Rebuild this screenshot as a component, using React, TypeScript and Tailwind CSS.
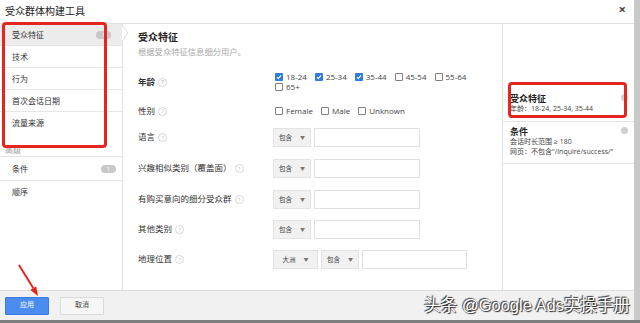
import { Fragment } from 'react';

const navItems = ['受众特征', '技术', '行为', '首次会话日期', '流量来源'];
const ages = [
    { label: '18-24', checked: true },
    { label: '25-34', checked: true },
    { label: '35-44', checked: true },
    { label: '45-54', checked: false },
    { label: '55-64', checked: false },
    { label: '65+', checked: false },
];

function Box({ checked }: { checked: boolean }) {
    if (checked) {
        return (
            <span className="w-[8px] h-[8px] rounded-[1px] bg-[#2e7be0] flex items-center justify-center shrink-0">
                <svg width="6" height="6" viewBox="0 0 6 6"><polyline points="1,3.2 2.4,4.6 5,1.4" fill="none" stroke="#fff" strokeWidth="1.2" /></svg>
            </span>
        );
    }
    return <span className="w-[8px] h-[8px] rounded-[1px] border border-[#808080] bg-white shrink-0" />;
}

function Help() {
    return (
        <span className="ml-[3px] w-[9px] h-[9px] rounded-full border border-[#d6d6d6] text-[#c4c4c4] text-[6px] leading-none flex items-center justify-center shrink-0">?</span>
    );
}

function Label({ text, bold }: { text: string; bold?: boolean }) {
    return (
        <div className={`w-[135px] flex items-center text-[8.5px] text-[#333] ${bold ? 'font-bold' : ''}`}>
            {text}<Help />
        </div>
    );
}

function Select({ text, w }: { text: string; w: string }) {
    return (
        <div className={`${w} h-[19px] bg-[#f1f1f1] border border-[#e3e3e3] flex items-center justify-center gap-[8px] text-[6.5px] text-[#444]`}>
            <span>{text}</span>
            <span className="text-[5px] text-[#777]">▼</span>
        </div>
    );
}

function Input({ w }: { w: string }) {
    return <div className={`${w} h-[19px] bg-white border border-[#e0e0e0]`} />;
}

export default function App() {
    return (
        <div className="relative w-[640px] h-[323px] bg-white overflow-hidden flex border-b-[3px] border-[#7d7d7d] font-['Open_Sans','Noto_Sans_CJK_SC',sans-serif]">
            <div className="flex-1 flex flex-col border-r-[6px] border-[#c9c9c9]">
                {/* HEADER */}
                <header className="h-[24px] border-b border-[#e2e2e2] flex items-center justify-between pl-[5px] pr-[8px] shrink-0">
                    <h1 className="text-[10px] text-[#222]">受众群体构建工具</h1>
                    <span className="text-[13px] font-bold text-[#444] leading-none pb-[4px]">×</span>
                </header>

                <div className="flex flex-1 min-h-0">
                    {/* NAV */}
                    <nav className="w-[123px] border-r border-[#e2e2e2] shrink-0 flex flex-col">
                        {navItems.map((n, i) => (
                            <div key={n} className={`h-[22px] flex items-center justify-between pl-[12px] text-[8px] text-[#333] ${i < 4 ? 'border-b border-[#e6e6e6]' : ''} ${i === 0 ? 'bg-[#ececec] pr-[11px]' : ''}`}>
                                {n}
                                {i === 0 && <span className="w-[15px] h-[8px] rounded-full bg-[#c8c8c8] text-white text-[6px] leading-none flex items-center justify-center">1</span>}
                            </div>
                        ))}
                        <div className="mt-[12px] h-[11px] border-b border-[#e6e6e6] pl-[5px] text-[8px] leading-[8px] text-[#a0a0a0]">高级</div>
                        <div className="h-[24px] border-b border-[#e6e6e6] flex items-center justify-between pl-[12px] pr-[6px] text-[8px] text-[#333]">
                            条件
                            <span className="w-[15px] h-[8px] rounded-full bg-[#c8c8c8] text-white text-[6px] leading-none flex items-center justify-center">1</span>
                        </div>
                        <div className="h-[22px] flex items-center pl-[12px] text-[8px] text-[#333]">顺序</div>
                    </nav>

                    {/* MAIN FORM */}
                    <main className="w-[380px] border-r border-[#e2e2e2] shrink-0 pl-[15px] pt-[6px] flex flex-col">
                        <h2 className="text-[10px] leading-[14px] font-bold text-[#222]">受众特征</h2>
                        <p className="mt-[2px] text-[8.3px] leading-[12px] text-[#a8a8a8]">根据受众特征信息细分用户。</p>

                        <div className="mt-[13px] h-[22px] flex items-center">
                            <Label text="年龄" bold />
                            <div className="w-[200px] flex flex-wrap gap-x-[8px] pl-[2px]">
                                {ages.map(a => (
                                    <span key={a.label} className="h-[10px] flex items-center gap-[3px] text-[8px] text-[#444]">
                                        <Box checked={a.checked} />{a.label}
                                    </span>
                                ))}
                            </div>
                        </div>
                        <div className="mt-[11px] h-[14px] flex items-center">
                            <Label text="性别" />
                            <div className="flex gap-x-[8px] pl-[2px]">
                                {['Female', 'Male', 'Unknown'].map(g => (
                                    <span key={g} className="flex items-center gap-[3px] text-[8px] text-[#444]"><Box checked={false} />{g}</span>
                                ))}
                            </div>
                        </div>
                        {['语言', '兴趣相似类别（覆盖面）', '有购买意向的细分受众群', '其他类别'].map((l, i) => (
                            <div key={l} className={`${i === 0 ? 'mt-[10px]' : i === 3 ? 'mt-[11px]' : 'mt-[12px]'} h-[19px] flex items-center`}>
                                <Label text={l} />
                                <div className="flex gap-[3px]">
                                    <Select text="包含" w="w-[38px]" />
                                    <Input w="w-[106px]" />
                                </div>
                            </div>
                        ))}
                        <div className="mt-[11px] h-[19px] flex items-center">
                            <Label text="地理位置" />
                            <div className="flex gap-[3px]">
                                <Select text="大洲" w="w-[45px]" />
                                <Select text="包含" w="w-[38px]" />
                                <Input w="w-[105px]" />
                            </div>
                        </div>
                    </main>

                    {/* SUMMARY */}
                    <aside className="flex-1 flex flex-col pt-[64px]">
                        <div className="relative pl-[7px] pt-[6px] pb-[7px] border-b border-[#e6e6e6]">
                            <div className="text-[9px] leading-[10px] font-bold text-[#222]">受众特征</div>
                            <div className="text-[7px] leading-[10px] text-[#444]">年龄：18-24, 25-34, 35-44</div>
                            <span className="absolute right-[6px] top-[6px] w-[7px] h-[7px] rounded-full bg-[#cfcfcf]" />
                        </div>
                        <div className="relative pl-[7px] pt-[5px] pb-[6px] border-b border-[#e6e6e6]">
                            <div className="text-[9px] leading-[10px] font-bold text-[#222]">条件</div>
                            <div className="text-[7px] leading-[10px] text-[#444]">会话时长范围 ≥ 180</div>
                            <div className="text-[7px] leading-[10px] text-[#444]">网页：不包含"/inquire/success/"</div>
                            <span className="absolute right-[6px] top-[5px] w-[7px] h-[7px] rounded-full bg-[#cfcfcf]" />
                        </div>
                    </aside>
                </div>

                {/* FOOTER */}
                <footer className="h-[30px] bg-[#f1f1f1] border-t border-[#dcdcdc] flex items-center pl-[5px] gap-[11px] shrink-0">
                    <button className="w-[44px] h-[18px] bg-[#4a8cf0] border border-[#3b7be0] rounded-[1px] text-white text-[7px]">应用</button>
                    <button className="w-[44px] h-[18px] bg-[#f6f6f6] border border-[#dadada] rounded-[1px] text-[#444] text-[7px]">取消</button>
                </footer>
            </div>

            {/* selected nav chevron */}
            <svg className="absolute left-[121px] top-[25px]" width="9" height="18" viewBox="0 0 9 18">
                <polyline points="1,0 7,8 1,16" fill="#fff" stroke="#dcdcdc" strokeWidth="1" />
            </svg>

            {/* annotations */}
            <div className="absolute left-[2px] top-[22px] w-[105px] h-[126px] border-[3px] border-[#e3261f] rounded-[4px]" />
            <div className="absolute left-[508px] top-[82px] w-[119px] h-[36px] border-[3px] border-[#e3261f] rounded-[4px]" />
            <svg className="absolute left-[14px] top-[262px]" width="30" height="38" viewBox="0 0 30 38">
                <line x1="5" y1="3" x2="19.5" y2="26.5" stroke="#e3261f" strokeWidth="2" />
                <polygon points="24,34 16.3,28.1 22.3,24.5" fill="#e3261f" />
            </svg>

            <div className="absolute right-[10px] bottom-[7px] text-[16.5px] leading-none text-white [text-shadow:1px_1px_1px_#222,-1px_-1px_1px_#333] font-['Liberation_Sans','Noto_Sans_CJK_SC',sans-serif]">头条 @Google Ads实操手册</div>
        </div>
    );
}
